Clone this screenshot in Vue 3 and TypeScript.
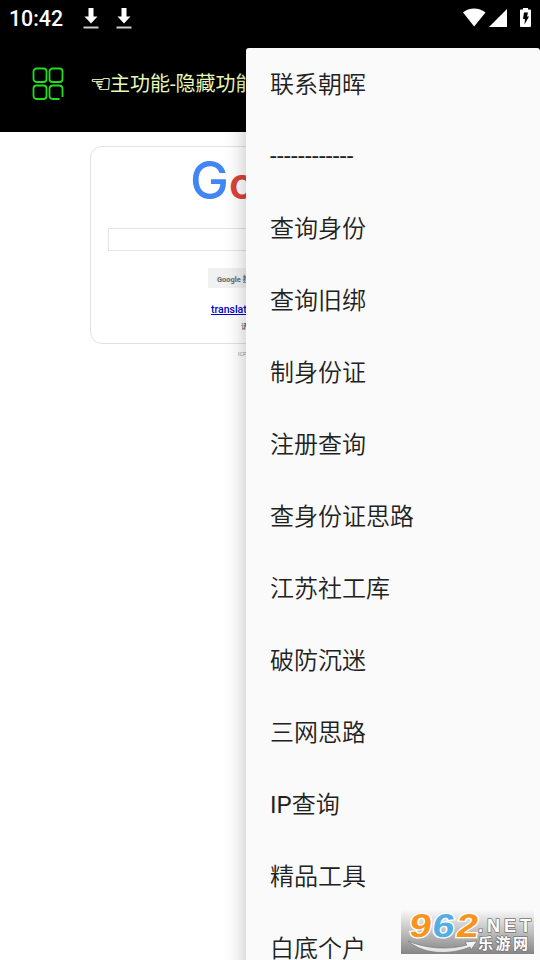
<script lang="ts" setup>
import { ref } from 'vue'

interface Letter {
  char: string
  color: string
}

const time = ref('10:42')
const title = ref('主功能-隐藏功能')
const menu = ref<string[]>([
  '联系朝晖',
  '------------',
  '查询身份',
  '查询旧绑',
  '制身份证',
  '注册查询',
  '查身份证思路',
  '江苏社工库',
  '破防沉迷',
  '三网思路',
  'IP查询',
  '精品工具',
  '白底个户'
])
const logo: Letter[] = [
  { char: 'G', color: 'blue' },
  { char: 'o', color: 'red' }
]
// latin characters are set heavier than the chinese ones
const latin = (x: string) => x.replace(/[^A-Za-z-]/g, '')
const chinese = (x: string) => x.replace(/[A-Za-z-]/g, '')
</script>

<template>
  <div class="screen">
    <header class="status">
      <span class="status--time">{{ time }}</span>
      <svg v-for="n in 2" :key="n" class="status--download" viewBox="0 0 16 22">
        <path d="M5.500 0h5v8.500h4L8 15.500 1.500 8.500h4z" fill="#fff" />
        <path d="M.5 18.500h15v2H.5z" fill="#ccc" />
      </svg>
      <svg class="status--system" viewBox="0 0 70 22">
        <path d="M0 4.500C6 -1 16 -1 22.500 4.500L11.200 18.500z" fill="#fff" />
        <path d="M44 1v18H26z" fill="#fff" />
        <path d="M58 1.500h2V0h5v1.500h2q1 0 1 1V18q0 1-1 1h-9q-1 0-1-1V2.500q0-1 1-1z" fill="#fff" />
        <path d="M61 4.500h4l-1 4h2l-4.500 8 .5-5.500h-2z" fill="#000" />
      </svg>
    </header>

    <div class="toolbar">
      <svg class="toolbar--grid" viewBox="0 0 32 34">
        <rect x="1.500" y="1.500" width="13" height="13.500" rx="3" />
        <rect x="17.500" y="1.500" width="13" height="13.500" rx="3" />
        <rect x="1.500" y="18.500" width="13" height="13.500" rx="3" />
        <path d="M27.500 32H21q-3.500 0-3.500-3.500V22q0-3.500 3.500-3.500h6q3.500 0 3.500 3.500v8" />
      </svg>
      <div class="toolbar--title"><span class="hand">☜</span>{{ title }}</div>
    </div>

    <main class="page">
      <section class="search">
        <div class="search--logo">
          <span v-for="x in logo" :key="x.char" :class="x.color">{{ x.char }}</span>
        </div>
        <div class="search--input"></div>
        <button class="search--button">Google 搜索</button>
        <a class="search--link">translate.google.cn</a>
        <p class="search--tip">请收藏我们的网址</p>
      </section>
      <p class="icp">ICP证合字B2-20070004号</p>
    </main>

    <nav class="menu">
      <div
        v-for="item in menu"
        :key="item"
        class="menu--item"
        :class="{ 'menu--divider': item.startsWith('-') }"
      >
        <span v-if="latin(item)" class="latin">{{ latin(item) }}</span
        >{{ chinese(item) }}
      </div>
    </nav>

    <div class="watermark">
      <svg viewBox="0 0 133 44">
        <defs>
          <linearGradient id="swoosh" x1="0" y1="0" x2="0" y2="1">
            <stop offset="0" stop-color="#fff" />
            <stop offset="1" stop-color="#ddd" />
          </linearGradient>
        </defs>
        <path
          d="M7 31C25 39 49 40 66 35l-2-3 12-1-6 9-1-3C47 46 22 44 7 31z"
          fill="url(#swoosh)"
          stroke="#777"
          stroke-width=".7"
        />
        <g class="digits" transform="translate(4 0) skewX(-8)">
          <text x="7" y="27" textLength="22" lengthAdjust="spacingAndGlyphs" fill="#f79420">9</text>
          <text x="30" y="27" textLength="22" lengthAdjust="spacingAndGlyphs" fill="#53aee5">6</text>
          <text x="54" y="27" textLength="22" lengthAdjust="spacingAndGlyphs" fill="#f79420">2</text>
        </g>
        <text class="net" x="77" y="22" textLength="53" lengthAdjust="spacing">.NET</text>
        <text class="cn" x="77" y="39" textLength="50">乐游网</text>
      </svg>
    </div>
  </div>
</template>

<style>
body {
  overflow: hidden;
}
</style>

<style scoped>
.screen {
  position: relative;
  width: 540px;
  height: 960px;
  overflow: hidden;
  background-color: white;
  font-family: Roboto, 'Noto Sans CJK SC', sans-serif;
}

p {
  margin: 0;
}

.status {
  display: flex;
  height: 48px;
  box-sizing: border-box;
  padding: 8px 1px 0 9px;
  background-color: black;
  color: white;
}

.status--time {
  width: 73.5px;
  font-size: 21.3px;
  font-weight: 500;
  line-height: 22px;
}

.status--download {
  width: 16px;
  height: 22px;
  margin-right: 17px;
}

.status--system {
  width: 70px;
  height: 22px;
  margin-left: auto;
  margin-right: 6px;
}

.toolbar {
  display: flex;
  height: 84px;
  box-sizing: border-box;
  padding: 19px 0 0 32px;
  background-color: black;
}

.toolbar--grid {
  width: 32px;
  height: 34px;
  fill: none;
  stroke: #22dc22;
  stroke-width: 1.8;
}

.toolbar--title {
  display: flex;
  margin-top: 1px;
  margin-left: 26px;
  color: #e6f8b8;
  font-size: 20px;
  line-height: 32px;
  white-space: nowrap;
}

.hand {
  width: 20px;
  font-family: 'DejaVu Sans', sans-serif;
  font-size: 24px;
  -webkit-text-stroke: 0.4px #e6f8b8;
}

.page {
  padding: 14px 90px;
}

.search {
  display: flex;
  flex-direction: column;
  align-items: center;
  height: 198px;
  box-sizing: border-box;
  border: 1px solid #e2e2e2;
  border-radius: 12px;
}

.search--logo {
  display: flex;
  align-items: baseline;
  width: 160px;
  height: 81px;
  font-family: Inter, sans-serif;
  font-size: 52px;
  font-weight: 500;
  line-height: 68px;
}

.blue {
  width: 39px;
  color: #4285f4;
}

.red {
  color: #db4437;
  font-size: 43px;
  font-weight: 600;
}

.search--input {
  width: 324px;
  height: 23px;
  box-sizing: border-box;
  border: 1px solid #e5e5e5;
}

.search--button {
  width: 124px;
  height: 20px;
  margin-top: 17px;
  padding: 0 0 0 9px;
  border: 0;
  background-color: #f1f1f1;
  color: #666;
  font-family: inherit;
  font-size: 7.5px;
  font-weight: 700;
  text-align: left;
}

.search--link {
  width: 118px;
  margin-top: 15px;
  color: #0000cc;
  font-size: 10.5px;
  font-weight: 500;
  line-height: 14px;
  text-decoration: underline;
  white-space: nowrap;
}

.search--tip {
  width: 58px;
  margin-top: 4px;
  color: #333;
  font-size: 7px;
  line-height: 12px;
  white-space: nowrap;
}

.icp {
  width: 64px;
  margin: 5px auto 0;
  color: #999;
  font-size: 5.5px;
  line-height: 10px;
  white-space: nowrap;
}

.menu {
  position: absolute;
  top: 48px;
  left: 246px;
  width: 294px;
  height: 936px;
  border-radius: 3px;
  background-color: #fafafa;
  box-shadow: 0 6px 22px rgba(0, 0, 0, 0.26);
}

.menu--item {
  height: 72px;
  box-sizing: border-box;
  padding-top: 1px;
  padding-left: 24px;
  color: #212121;
  font-family: Roboto, 'Noto Sans CJK SC DemiLight', 'Noto Sans CJK SC', sans-serif;
  font-size: 24px;
  font-weight: 350;
  line-height: 73px;
}

.latin {
  font-weight: 400;
}

.menu--divider {
  padding-top: 0;
  line-height: 72px;
  letter-spacing: 0.35px;
}

.watermark {
  position: absolute;
  right: 6px;
  bottom: 6px;
  width: 133px;
  height: 44px;
  background: linear-gradient(#f8f8f8, #858585);
}

.watermark svg {
  display: block;
  width: 133px;
  height: 44px;
}

.digits {
  font-family: 'Liberation Sans', sans-serif;
  font-size: 33px;
  font-weight: 700;
  stroke: white;
  stroke-width: 2.5px;
  paint-order: stroke;
}

.net,
.cn {
  fill: white;
  stroke: #777;
  stroke-width: 1.5px;
  paint-order: stroke;
  font-weight: 700;
}

.net {
  font-family: 'Liberation Sans', sans-serif;
  font-size: 18px;
}

.cn {
  font-family: 'Noto Sans CJK SC', sans-serif;
  font-size: 15px;
}
</style>
